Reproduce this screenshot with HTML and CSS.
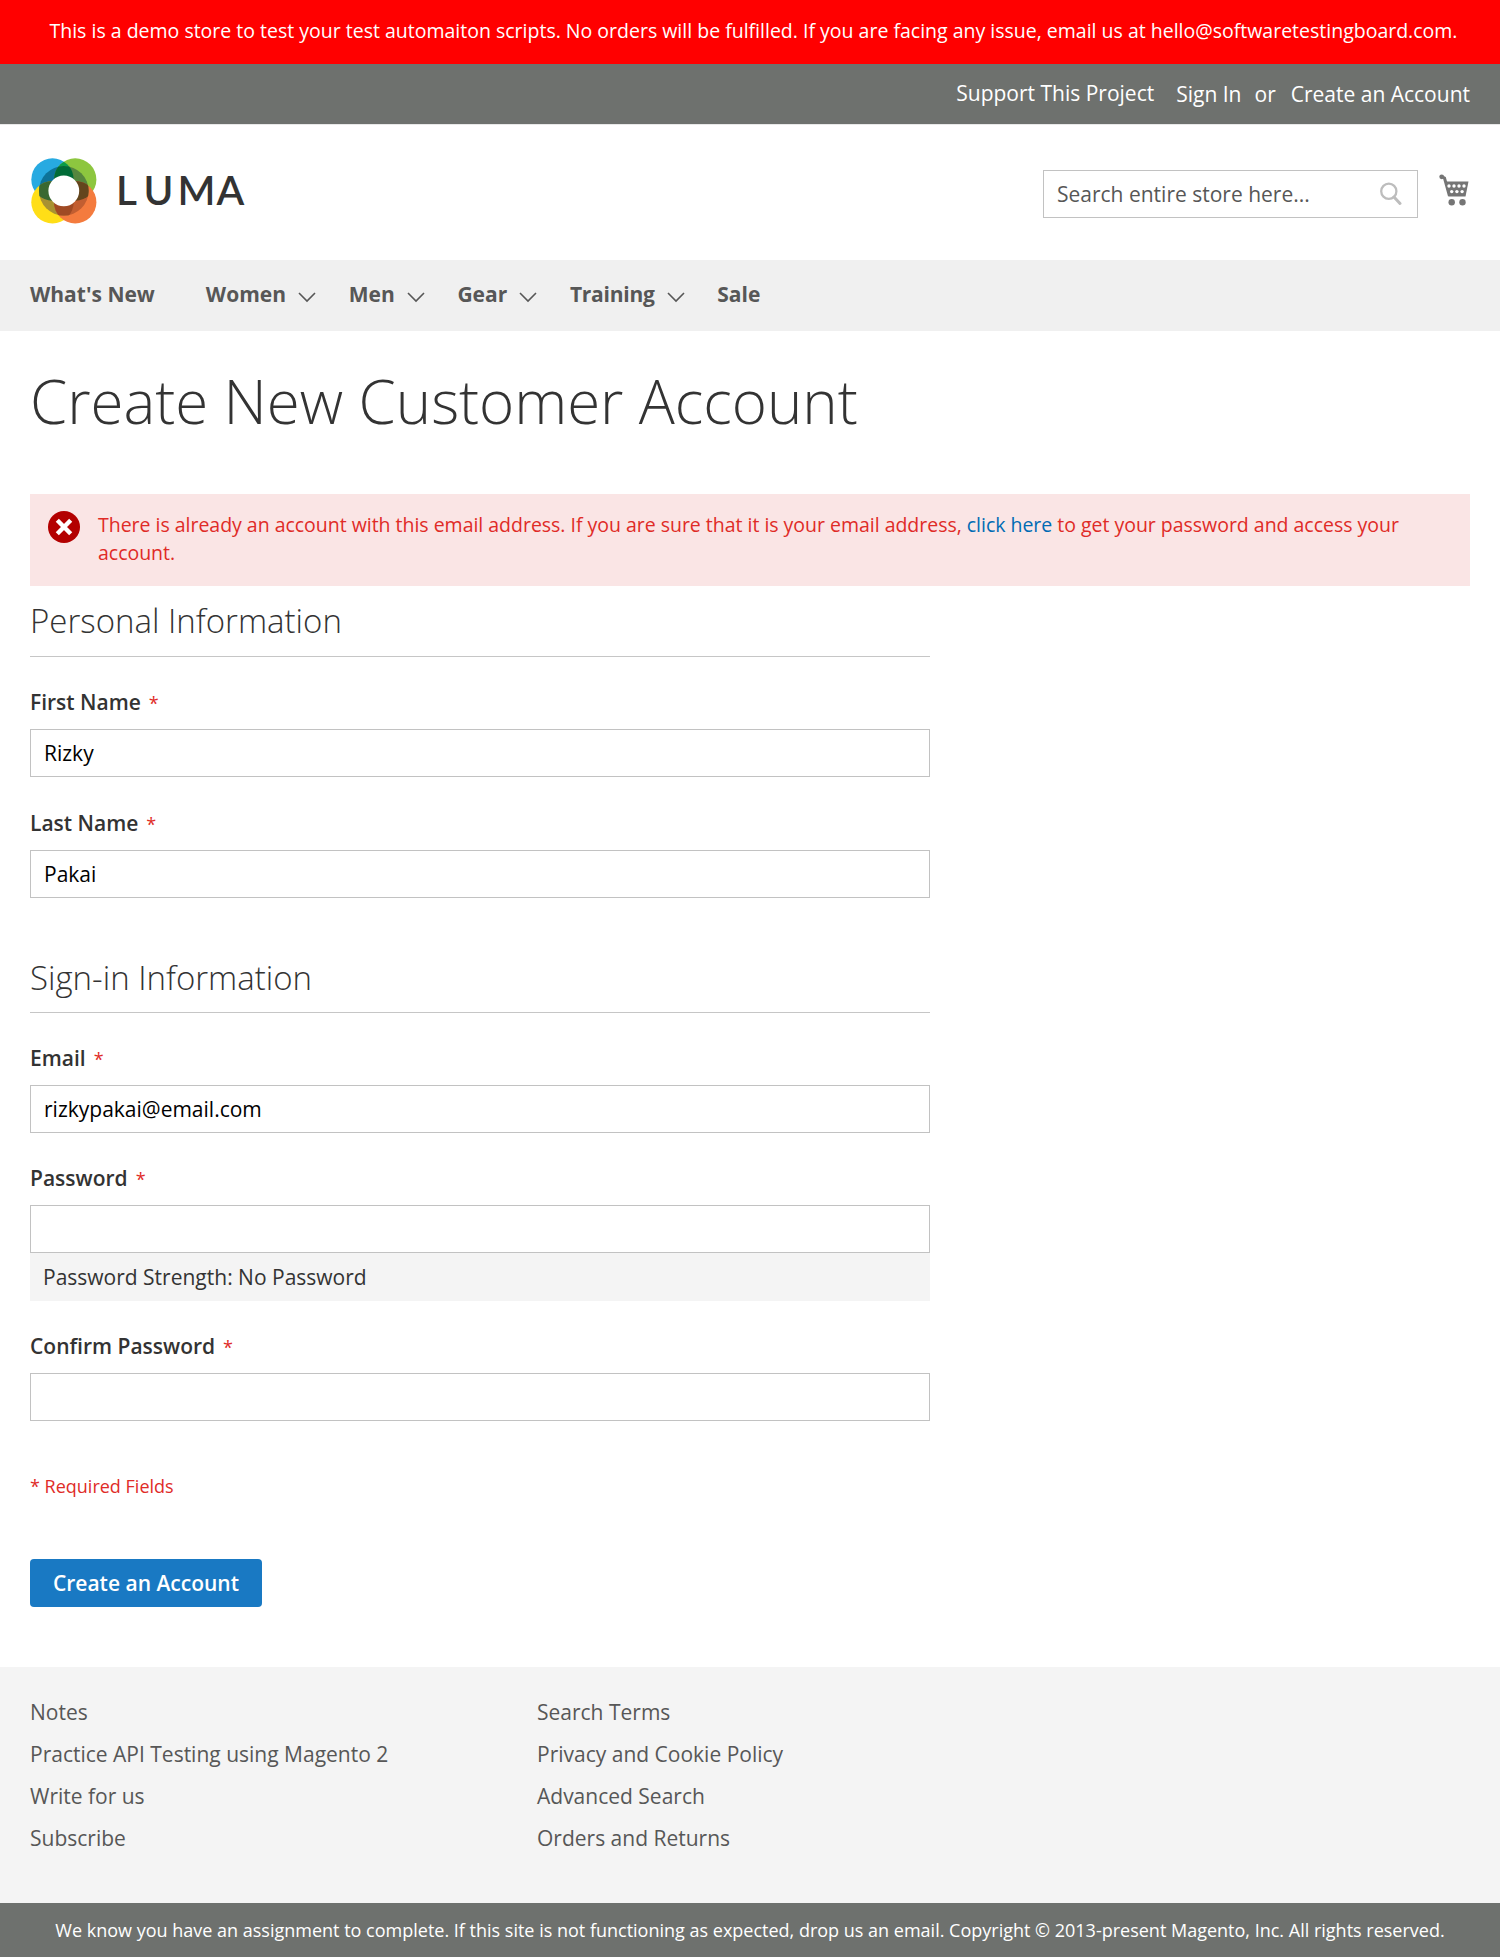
FILE: index.html
```html
<!DOCTYPE html>
<html lang="en">
<head>
<meta charset="utf-8">
<title>Create New Customer Account</title>
<link rel="stylesheet" href="styles.css">
</head>
<body>
<p class="notice">This is a demo store to test your test automaiton scripts. No orders will be fulfilled. If you are facing any issue, email us at hello@softwaretestingboard.com.</p>
<header>
  <div class="panel">
    <a class="support">Support This Project</a>
    <a class="signin">Sign In</a>
    <span class="or">or</span>
    <a class="register">Create an Account</a>
  </div>
  <div class="header-content">
    <a class="logo">
      <svg class="logo-mark" width="66" height="66" viewBox="0 0 66 66">
        <defs>
          <clipPath id="tl"><circle cx="21.5" cy="21.5" r="21.2"/></clipPath>
          <clipPath id="br"><circle cx="44.2" cy="44.2" r="21.2"/></clipPath>
          <clipPath id="ring"><circle cx="32.8" cy="32.8" r="24.8"/></clipPath>
        </defs>
        <circle cx="21.5" cy="21.5" r="21.2" fill="#27aae1"/>
        <circle cx="44.2" cy="21.5" r="21.2" fill="#8dc63f"/>
        <circle cx="21.5" cy="44.2" r="21.2" fill="#ffde17"/>
        <circle cx="44.2" cy="44.2" r="21.2" fill="#f47b3e"/>
        <circle cx="44.2" cy="21.5" r="21.2" fill="#0a9c49" clip-path="url(#tl)"/>
        <g clip-path="url(#ring)">
          <circle cx="21.5" cy="21.5" r="21.2" fill="#0d7399"/>
          <circle cx="44.2" cy="21.5" r="21.2" fill="#56863e"/>
          <circle cx="21.5" cy="44.2" r="21.2" fill="#a89232"/>
          <circle cx="44.2" cy="44.2" r="21.2" fill="#c25e31"/>
          <circle cx="44.2" cy="21.5" r="21.2" fill="#006b37" clip-path="url(#tl)"/>
          <circle cx="21.5" cy="44.2" r="21.2" fill="#3a6831" clip-path="url(#tl)"/>
          <circle cx="44.2" cy="21.5" r="21.2" fill="#63451d" clip-path="url(#br)"/>
          <circle cx="21.5" cy="44.2" r="21.2" fill="#a04a24" clip-path="url(#br)"/>
        </g>
        <circle cx="32.8" cy="32.8" r="15.4" fill="#fff"/>
      </svg>
      <span class="logo-text"><span>L</span><span>U</span><span>M</span><span>A</span></span>
    </a>
    <div class="header-tools">
      <div class="search">
        <span>Search entire store here...</span>
        <svg width="22" height="24" viewBox="0 0 22 24" fill="none" stroke="#bdbdbd"><circle cx="8.8" cy="9.2" r="7.6" stroke-width="2.3"/><path d="M14 15l6 6.5" stroke-width="3" stroke-linecap="round"/></svg>
      </div>
      <svg class="cart" width="30" height="32" viewBox="0 0 30 32">
        <path d="M2.5 2.5L5.5 4l5 18" fill="none" stroke="#757575" stroke-width="3"/>
        <circle cx="2.7" cy="2.8" r="2.4" fill="#757575"/>
        <path d="M6 7.500H29.500L26.500 22.500H10z" fill="#757575"/>
        <g fill="#fff"><circle cx="10" cy="12" r="1.700"/><circle cx="15" cy="12" r="1.700"/><circle cx="20" cy="12" r="1.700"/><circle cx="25" cy="12" r="1.700"/><circle cx="12.700" cy="17.600" r="1.700"/><circle cx="17.900" cy="17.600" r="1.700"/><circle cx="23.100" cy="17.600" r="1.700"/></g>
        <circle cx="12.700" cy="28.200" r="3.200" fill="#757575"/><circle cx="23.500" cy="28.200" r="3.200" fill="#757575"/>
      </svg>
    </div>
  </div>
</header>
<nav>
  <a>What's New</a>
  <a class="parent">Women<svg class="chevron" viewBox="0 0 18 11"><path d="M1 1l8 8 8-8"/></svg></a>
  <a class="parent">Men<svg class="chevron" viewBox="0 0 18 11"><path d="M1 1l8 8 8-8"/></svg></a>
  <a class="parent">Gear<svg class="chevron" viewBox="0 0 18 11"><path d="M1 1l8 8 8-8"/></svg></a>
  <a class="parent training">Training<svg class="chevron" viewBox="0 0 18 11"><path d="M1 1l8 8 8-8"/></svg></a>
  <a>Sale</a>
</nav>
<main>
  <h1>Create New Customer Account</h1>
  <div class="message">
    <svg width="32" height="32" viewBox="0 0 32 32"><circle cx="16" cy="16" r="16" fill="#b30000"/><path d="M9.300 9.300l13.400 13.400M22.700 9.300L9.300 22.700" stroke="#fff" stroke-width="4.400"/></svg>
    <p>There is already an account with this email address. If you are sure that it is your email address, <a>click here</a> to get your password and access your account.</p>
  </div>
  <form class="account-form">
    <h2>Personal Information</h2>
    <div class="field first"><label for="first">First Name</label><input id="first" type="text" value="Rizky"></div>
    <div class="field"><label for="last">Last Name</label><input id="last" type="text" value="Pakai"></div>
    <h2 class="second">Sign-in Information</h2>
    <div class="field"><label for="email">Email</label><input id="email" type="text" value="rizkypakai@email.com"></div>
    <div class="field"><label for="pass">Password</label><input id="pass" type="password"><div class="strength">Password Strength: No Password</div></div>
    <div class="field"><label for="confirm">Confirm Password</label><input id="confirm" type="password"></div>
    <p class="required">* Required Fields</p>
    <button type="button">Create an Account</button>
  </form>
</main>
<footer>
  <ul><li>Notes</li><li>Practice API Testing using Magento 2</li><li>Write for us</li><li>Subscribe</li></ul>
  <ul><li>Search Terms</li><li>Privacy and Cookie Policy</li><li>Advanced Search</li><li>Orders and Returns</li></ul>
</footer>
<p class="copyright">We know you have an assignment to complete. If this site is not functioning as expected, drop us an email. Copyright © 2013-present Magento, Inc. All rights reserved.</p>
</body>
</html>
```
FILE: styles.css
```css
* { box-sizing: border-box; }
body { margin: 0; background: #fff; color: #333; font: 400 21px/30px "Open Sans", "Noto Sans", sans-serif; }
p, h1, h2, ul { margin: 0; padding: 0; }
.notice { height: 64px; padding: 16px 0 0 7px; background: #f00; color: #fff; text-align: center; font-size: 19.5px; white-space: nowrap; }
.panel { height: 61px; display: flex; justify-content: flex-end; padding: 15px 30px 0; background: #6e716e; border-bottom: 1px solid #e8e8e8; color: #fff; white-space: nowrap; }
.support { margin: -1px 22px 0 0; }
.or { margin: 0 15px 0 13px; }
.header-content { height: 135px; display: flex; justify-content: space-between; padding: 33px 30px 0 31px; }
.logo { display: flex; }
.logo-text { display: grid; grid-template-columns: 27.500px 34px 39px 30px; margin: 8px 0 0 19px; font: 600 40.5px/48px Lato, sans-serif; color: #333; }
.header-tools { display: flex; align-items: flex-start; }
.search { width: 375px; height: 48px; margin: 12px 21px 0 0; padding: 0 15px 0 13px; border: 1px solid #c2c2c2; display: flex; align-items: center; justify-content: space-between; color: #575757; }
.cart { margin: 16px 1px 0 0; }
nav { height: 71px; background: #f0f0f0; padding: 19px 30px 0; display: flex; font-weight: 700; color: #575757; }
nav a { margin-right: 51px; }
nav .parent { display: flex; margin-right: 32.700px; }
nav .training { letter-spacing: -0.25px; }
.chevron { width: 18px; height: 11px; margin: 13px 0 0 12px; fill: none; stroke: #575757; stroke-width: 1.6; }
main { height: 1336px; padding: 37px 30px 0; }
h1 { font-size: 60px; line-height: 66px; font-weight: 300; letter-spacing: -0.05px; }
.message { height: 92px; margin-top: 60px; padding: 17px 66px 0 18px; background: #fae5e5; display: flex; color: #e02b27; font-size: 19.5px; line-height: 27.5px; letter-spacing: -0.02px; }
.message svg { flex: none; margin-right: 18px; }
.message a { color: #006bb4; }
.account-form { width: 900px; }
h2 { height: 71px; padding-top: 15px; border-bottom: 1px solid #c6c6c6; font-size: 33px; line-height: 40px; font-weight: 300; margin-bottom: 29px; }
h2.second { margin-top: 44px; padding-top: 16px; }
.field { margin-bottom: 29px; }
.field.first { margin-bottom: 30px; }
label { display: block; height: 43px; padding-top: 1px; font-weight: 600; }
label::after { content: "*"; margin-left: 8px; color: #e02b27; font-size: 18px; font-weight: 400; }
input { display: block; width: 100%; height: 48px; border: 1px solid #c2c2c2; padding: 0 13px; font: inherit; color: #000; background: #fff; }
.strength { height: 48px; background: #f4f4f4; padding: 9px 13px; }
.required { margin-top: 50px; color: #e02b27; font-size: 18px; }
button { display: block; width: 232px; height: 48px; margin-top: 58px; padding: 0; border: 0; border-radius: 4px; background: #1979c3; color: #fff; font: inherit; font-weight: 600; }
footer { height: 236px; display: flex; padding: 30px 30px 0; background: #f4f4f4; color: #575757; }
footer ul { width: 507px; list-style: none; }
footer li { height: 42px; }
.copyright { height: 54px; padding-top: 12px; background: #6e716e; color: #fff; text-align: center; font-size: 18px; white-space: nowrap; }
```
